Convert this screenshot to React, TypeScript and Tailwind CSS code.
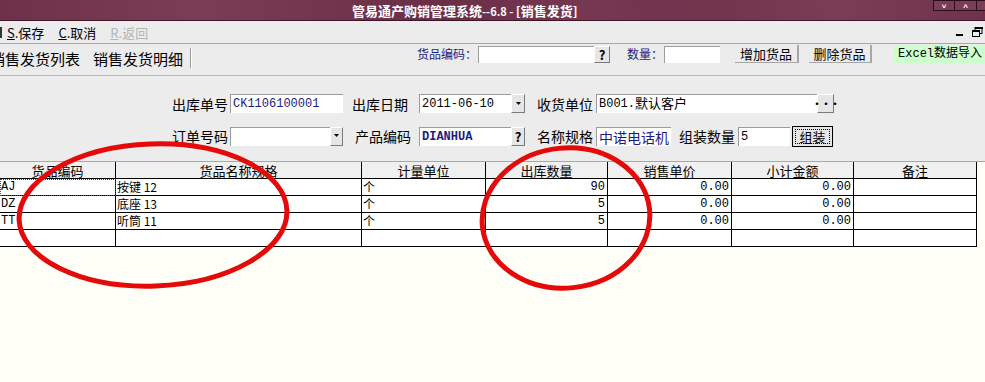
import React from 'react';

const cols = ['货品编码', '货品名称规格', '计量单位', '出库数量', '销售单价', '小计金额', '备注'];

const rows = [
  ['AJ', '按键 12', '个', '90', '0.00', '0.00', ''],
  ['DZ', '底座 13', '个', '5', '0.00', '0.00', ''],
  ['TT', '听筒 11', '个', '5', '0.00', '0.00', ''],
  ['', '', '', '', '', '', ''],
];

// raised little button used next to inputs
function MiniBtn({ children, className = '' }: { children?: React.ReactNode; className?: string }) {
  return (
    <div
      className={`shrink-0 flex items-center justify-center bg-[#e6e6e6] border border-t-white border-l-white border-r-[#7a7a7a] border-b-[#7a7a7a] text-black ${className}`}
    >
      {children}
    </div>
  );
}

function Field({ w, children, className = '' }: { w: string; children?: React.ReactNode; className?: string }) {
  return (
    <div
      className={`${w} shrink-0 h-[19px] bg-white border-t border-l border-[#9c9c9c] flex items-center pl-[2px] overflow-hidden whitespace-nowrap ${className}`}
    >
      {children}
    </div>
  );
}

function Label({ className = '', children }: { className?: string; children: React.ReactNode }) {
  return <span className={`shrink-0 whitespace-nowrap ${className}`}>{children}</span>;
}

function Arrow() {
  return (
    <svg width="7" height="4" viewBox="0 0 7 4">
      <path d="M1 0h5L3.5 3z" fill="#000" />
    </svg>
  );
}

export default function App() {
  return (
    <div className="w-[985px] h-[382px] overflow-hidden relative bg-[#fffff8] font-['Noto_Sans_CJK_SC',sans-serif] text-black">
      {/* title bar */}
      <div className="h-[21px] flex items-start bg-[#6b2e47] bg-[radial-gradient(circle_at_20%_40%,#7a3d56_0,transparent_30%),radial-gradient(circle_at_60%_70%,#763852_0,transparent_25%),radial-gradient(circle_at_85%_30%,#7a3d56_0,transparent_25%)] border-b border-[#3d1526]">
        <div className="pl-[352px] pt-[2px] text-white font-bold text-[13px] leading-[17px] whitespace-nowrap">
          管易通产购销管理系统<span className="text-[11px]">--6.8 - </span>[销售发货]
        </div>
        <div className="ml-auto flex">
          <div className="w-[22px] h-[11px] border border-[#2d0f1c] bg-[#7a3c56] flex items-center justify-center text-white text-[8px] leading-none font-bold">
            ˅
          </div>
          <div className="w-[22px] h-[11px] border border-l-0 border-[#2d0f1c] bg-[#7a3c56] flex items-center justify-center text-white text-[8px] leading-none font-bold">
            ˄
          </div>
          <div className="w-[8px] h-[11px] border border-l-0 border-r-0 border-[#2d0f1c] bg-[#7a3c56]" />
        </div>
      </div>

      {/* menu bar */}
      <div className="h-[22px] bg-[#ececec] flex items-center text-[13px] leading-none whitespace-nowrap">
        <div className="w-[2px] h-[11px] bg-[#333]" />
        <span className="ml-[5px]"><u>S</u>.保存</span>
        <span className="ml-[14px]"><u>C</u>.取消</span>
        <span className="ml-[14px] text-[#b4b4b4]"><u>R</u>.返回</span>
        <div className="ml-auto flex items-center gap-[9px] pr-[2px]">
          <div className="w-[7px] h-[2px] bg-black mt-[6px]" />
          <svg width="11" height="10" viewBox="0 0 11 10">
            <rect x="3" y="0.5" width="7" height="6" fill="none" stroke="#000" />
            <rect x="3" y="0" width="8" height="2" fill="#000" />
            <rect x="0.5" y="3.5" width="7" height="6" fill="#ececec" stroke="#000" />
            <rect x="0" y="3" width="8" height="2" fill="#000" />
          </svg>
        </div>
      </div>

      <div className="border-t border-[#a8a8a8]" />

      {/* tabs + goods toolbar */}
      <div className="h-[32px] bg-[#ececec] flex items-start border-b border-[#b8b8b8] whitespace-nowrap">
        <div className="shrink-0 flex items-center h-[24px] mt-[2px] text-[15px] leading-none">
          <span className="ml-[-10px]">销售发货列表</span>
          <span className="ml-[13px]">销售发货明细</span>
          <div className="ml-[7px] w-[2px] h-[20px] border-l border-[#9a9a9a] border-r border-r-white" />
        </div>
        <div className="flex items-center mt-[1px] h-[18px] text-[12px] leading-none">
          <Label className="ml-[225px] text-[#1c1c80]">货品编码：</Label>
          <div className="shrink-0 ml-[1px] w-[116px] h-[17px] bg-white border-t border-l border-[#9c9c9c]" />
          <MiniBtn className="w-[16px] h-[17px] font-bold text-[13px]">?</MiniBtn>
          <Label className="ml-[17px] text-[#1c1c80]">数量：</Label>
          <div className="shrink-0 ml-[1px] w-[56px] h-[17px] bg-white border-t border-l border-[#9c9c9c]" />
          <div className="shrink-0 ml-[15px] w-[64px] h-[18px] flex items-center justify-center border-r-2 border-b border-[#a6a6a6] text-[13px]">
            增加货品
          </div>
          <div className="shrink-0 ml-[10px] w-[63px] h-[18px] flex items-center justify-center border-r-2 border-b border-[#a6a6a6] text-[13px]">
            删除货品
          </div>
          <div className="shrink-0 ml-[22px] w-[100px] h-[18px] flex items-center pl-[4px] bg-[#ccffcc] font-['Liberation_Mono','Noto_Sans_CJK_SC',monospace] text-[12px]">
            Excel数据导入 ↓
          </div>
        </div>
      </div>

      {/* form */}
      <div className="h-[85px] bg-[#ececec] pt-[18px] text-[14px] leading-none whitespace-nowrap">
        <div className="flex items-center h-[19px]">
          <Label className="ml-[172px]">出库单号</Label>
          <Field w="w-[113px] ml-[2px]" className="text-[#1c1c80] font-['Liberation_Mono','Noto_Sans_CJK_SC',monospace] text-[12px]">
            CK1106100001
          </Field>
          <Label className="ml-[9px]">出库日期</Label>
          <Field w="w-[92px] ml-[11px]" className="font-['Liberation_Mono',monospace] text-[12px]">
            2011-06-10
          </Field>
          <MiniBtn className="w-[14px] h-[19px]"><Arrow /></MiniBtn>
          <Label className="ml-[12px]">收货单位</Label>
          <Field w="w-[221px] ml-[3px]" className="font-['Liberation_Mono','Noto_Sans_CJK_SC',monospace] text-[12px]">
            B001.<span className="text-[13px]">默认客户</span>
          </Field>
          <MiniBtn className="w-[17px] h-[19px] text-[10px] font-bold tracking-[-1px]">···</MiniBtn>
        </div>
        <div className="flex items-center h-[20px] mt-[13px]">
          <Label className="ml-[172px]">订单号码</Label>
          <Field w="w-[100px] ml-[2px]" />
          <MiniBtn className="w-[13px] h-[19px]"><Arrow /></MiniBtn>
          <Label className="ml-[12px]">产品编码</Label>
          <Field w="w-[92px] ml-[8px]" className="text-[#1c1c80] font-bold font-['Liberation_Mono',monospace] text-[12px]">
            DIANHUA
          </Field>
          <MiniBtn className="w-[14px] h-[19px] font-bold text-[13px]">?</MiniBtn>
          <Label className="ml-[12px]">名称规格</Label>
          <Field w="w-[75px] ml-[3px]" className="text-[#1c1c80] text-[14px]">
            中诺电话机
          </Field>
          <Label className="ml-[8px]">组装数量</Label>
          <Field w="w-[52px] ml-[3px]" className="font-['Liberation_Mono',monospace] text-[12px]">
            5
          </Field>
          <div className="shrink-0 ml-[2px] w-[41px] h-[21px] border border-black bg-[#e6e6e6] p-[2px]">
            <div className="w-full h-full border border-dotted border-black flex items-center justify-center text-[13px]">
              组装
            </div>
          </div>
        </div>
      </div>

      <div className="border-t border-[#a8a8a8]" />

      {/* grid */}
      <div className="grid grid-cols-[116px_246px_124px_122px_124px_122px_123px] w-[977px] text-[12px] leading-none whitespace-nowrap">
        {cols.map((c) => (
          <div
            key={c}
            className="h-[17px] bg-[#f0f0f0] border-r border-b border-black flex items-center justify-center text-[13px]"
          >
            {c}
          </div>
        ))}
        {rows.map((r, ri) =>
          r.map((v, ci) => {
            const right = ci >= 3 && ci <= 5;
            const focus = ri === 0 && ci === 0;
            return (
              <div
                key={`${ri}-${ci}`}
                className={`h-[17px] bg-white border-r border-b border-black flex items-center overflow-hidden ${
                  right ? "justify-end pr-[2px] font-['Liberation_Mono',monospace]" : 'pl-[1px]'
                } ${focus ? 'outline outline-1 outline-dotted outline-offset-[-1px] outline-[#444]' : ''} ${
                  ci === 0 ? "font-['Liberation_Mono',monospace]" : ''
                }`}
              >
                {v}
              </div>
            );
          })
        )}
      </div>

      {/* red marker ellipses drawn over the grid */}
      <svg className="absolute inset-0 pointer-events-none" width="985" height="382" viewBox="0 0 985 382">
        <ellipse cx="153" cy="215" rx="134" ry="71" fill="none" stroke="#e50a0a" strokeWidth="5" transform="rotate(-2 153 215)" />
        <ellipse cx="566" cy="218" rx="84" ry="70" fill="none" stroke="#e50a0a" strokeWidth="5" transform="rotate(-6 566 218)" />
      </svg>
    </div>
  );
}
